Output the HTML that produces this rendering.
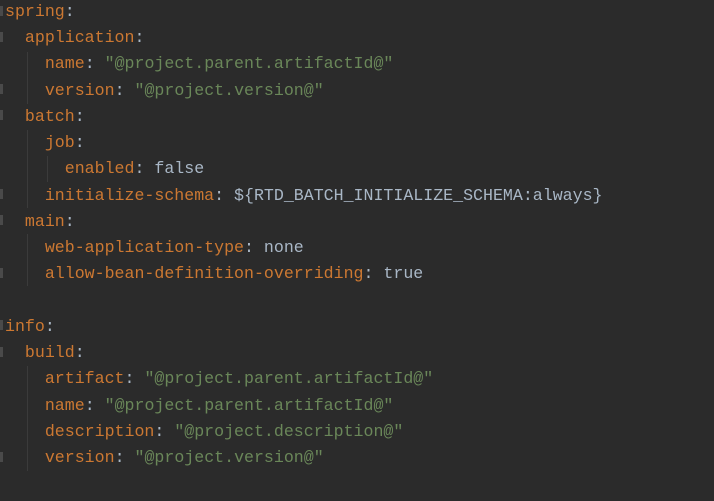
<!DOCTYPE html>
<html><head><style>
html,body{margin:0;padding:0;background:#2b2b2b;width:714px;height:501px;overflow:hidden}
.c{position:absolute;left:5px;top:-1px;font-family:"Liberation Mono",monospace;font-size:16.6px;line-height:26.24px;color:#a9b7c6;white-space:pre}
.k{color:#cc7832}.s{color:#6a8759}.p{color:#a9b7c6}
.g{position:absolute;width:1px;background:#3b3b3b}
.m{position:absolute;left:0;width:3px;height:10px;background:#4a4a4a}
</style></head><body>
<div class="g" style="left:27px;top:52px;height:52px"></div>
<div class="g" style="left:27px;top:130px;height:78px"></div>
<div class="g" style="left:47px;top:156px;height:26px"></div>
<div class="g" style="left:27px;top:234px;height:52px"></div>
<div class="g" style="left:27px;top:366px;height:105px"></div>
<div class="m" style="top:6px"></div>
<div class="m" style="top:32px"></div>
<div class="m" style="top:84px"></div>
<div class="m" style="top:110px"></div>
<div class="m" style="top:189px"></div>
<div class="m" style="top:215px"></div>
<div class="m" style="top:268px"></div>
<div class="m" style="top:320px"></div>
<div class="m" style="top:347px"></div>
<div class="m" style="top:452px"></div>
<div class="c"><span class="k">spring</span>:
  <span class="k">application</span>:
    <span class="k">name</span>: <span class="s">"@project.parent.artifactId@"</span>
    <span class="k">version</span>: <span class="s">"@project.version@"</span>
  <span class="k">batch</span>:
    <span class="k">job</span>:
      <span class="k">enabled</span>: false
    <span class="k">initialize-schema</span>: ${RTD_BATCH_INITIALIZE_SCHEMA:always}
  <span class="k">main</span>:
    <span class="k">web-application-type</span>: none
    <span class="k">allow-bean-definition-overriding</span>: true

<span class="k">info</span>:
  <span class="k">build</span>:
    <span class="k">artifact</span>: <span class="s">"@project.parent.artifactId@"</span>
    <span class="k">name</span>: <span class="s">"@project.parent.artifactId@"</span>
    <span class="k">description</span>: <span class="s">"@project.description@"</span>
    <span class="k">version</span>: <span class="s">"@project.version@"</span></div>
</body></html>
